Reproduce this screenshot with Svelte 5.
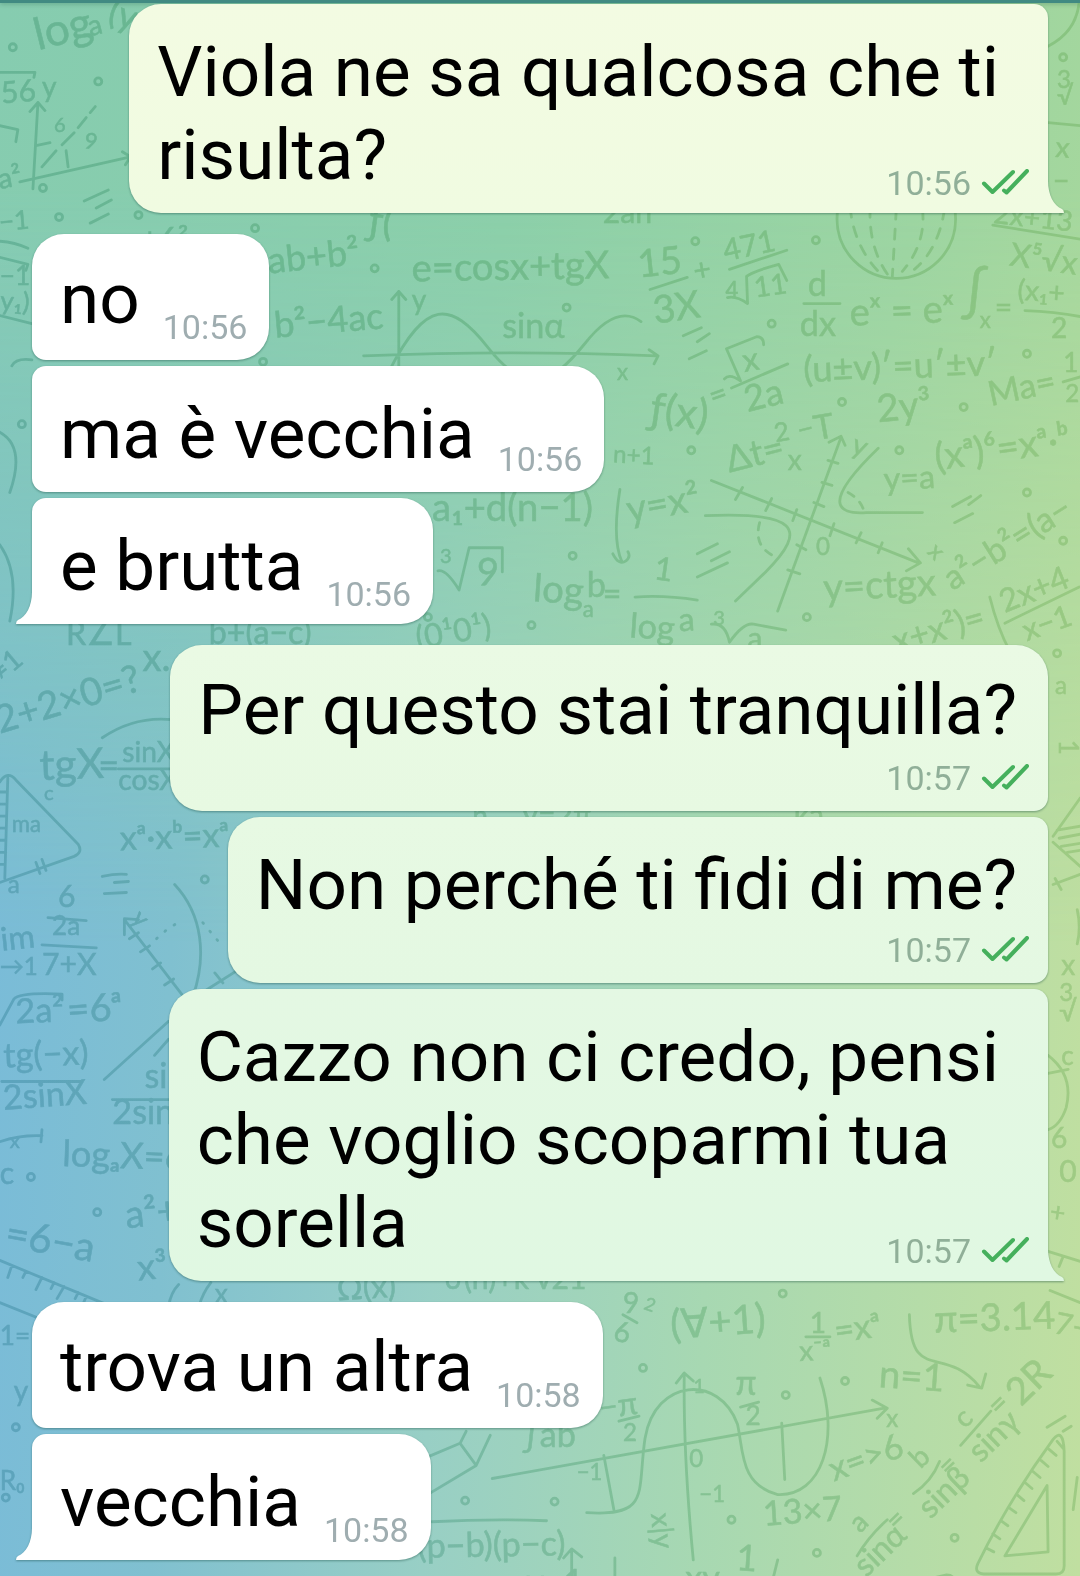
<script lang="ts">
  type Message = {
    text: string;
    time: string;
    out?: boolean;
    first?: boolean;
    last?: boolean;
    layout: 'inline' | 'stacked' | 'multi';
    from?: string;
    to?: string;
  };

  const messages: Message[] = [
    { text: 'Viola ne sa qualcosa che ti\nrisulta?', time: '10:56', out: true, last: true, layout: 'multi', from: '#f3fbe2', to: '#f0fbe1' },
    { text: 'no', time: '10:56', first: true, layout: 'inline' },
    { text: 'ma è vecchia', time: '10:56', layout: 'inline' },
    { text: 'e brutta', time: '10:56', last: true, layout: 'inline' },
    { text: 'Per questo stai tranquilla?', time: '10:57', out: true, first: true, layout: 'stacked', from: '#eafae4', to: '#e7f9e2' },
    { text: 'Non perché ti fidi di me?', time: '10:57', out: true, layout: 'stacked', from: '#e7f9e3', to: '#e4f8e2' },
    { text: 'Cazzo non ci credo, pensi\nche voglio scoparmi tua\nsorella', time: '10:57', out: true, last: true, layout: 'multi', from: '#e4f8e3', to: '#e0f8e2' },
    { text: 'trova un altra', time: '10:58', first: true, layout: 'inline' },
    { text: 'vecchia', time: '10:58', last: true, layout: 'inline' }
  ];

  // wallpaper formulas: text, x, baseline y, size, rotation
  const formulas: [string, number, number, number, number][] = [
    ['log', 38, 50, 44, -14], ['a', 90, 36, 28, -14], ['(y', 106, 22, 36, 18],
    ['56', 2, 103, 30, -5], ['y', 42, 97, 28, 0], ['6', 54, 131, 20, 0], ['9', 83, 147, 22, 10],
    ['a²', 0, 188, 28, -10], ['−1', 0, 230, 26, -5], ['−1', 0, 284, 26, 0], ['y₁)', 0, 308, 26, 4],
    ['+6²', 140, 250, 32, 0], ['ab+b²', 268, 272, 36, -6], ['b²−4ac', 274, 336, 36, -5],
    ['y', 410, 308, 28, 0], ['e=cosx+tgX', 410, 280, 38, -1], ['sinα', 500, 336, 34, 0],
    ['ƒ(', 366, 232, 40, 8], ['2an', 600, 222, 30, 0],
    ['15', 636, 276, 38, -6], ['+', 692, 280, 30, -10], ['3X', 652, 322, 38, -8],
    ['471', 722, 260, 30, -12], ['4', 722, 296, 22, 0], ['11', 752, 296, 28, -8],
    ['d', 804, 294, 34, 0], ['dx', 796, 334, 34, 0], ['eˣ = eˣ', 846, 324, 38, -2],
    ['∫', 956, 308, 54, 0], ['x', 975, 326, 22, 0], ['=', 990, 316, 30, 0],
    ['2x+13', 988, 222, 28, 6], ['X⁵√x', 1004, 264, 32, 8], ['(x₁+', 1012, 298, 28, 4], ['2', 1046, 336, 28, 0],
    ['x', 614, 378, 22, 0], ['ƒ(x)', 646, 420, 42, 8], ['=', 710, 405, 30, -20],
    ['x', 741, 370, 32, -10], ['2a', 744, 410, 36, -14],
    ['(u±v)′=u′±v′', 800, 380, 36, -2], ['2y³', 874, 420, 38, -6],
    ['Ma=', 986, 404, 34, -12], ['1', 1058, 370, 26, 0], ['2', 1060, 400, 24, 0],
    ['n+1', 610, 460, 24, 3], ['Δt=', 726, 470, 36, -14], ['2', 772, 440, 26, -10], ['x', 784, 468, 28, 0], ['−', 796, 438, 28, -14], ['T', 812, 438, 34, -10],
    ['y', 846, 450, 28, 20], ['y=a', 880, 488, 32, -3], ['(xᵃ)⁶=xᵃ·ᵇ', 932, 468, 38, -8],
    ['a₁+d(n−1)', 430, 518, 38, 0], ['y=x²', 626, 520, 38, -10],
    ['3', 438, 560, 20, 0], ['9', 474, 582, 38, 2], ['log', 530, 598, 38, 4], ['a', 580, 614, 22, 0], ['b', 584, 594, 34, 0], ['=', 600, 602, 32, 0],
    ['1', 650, 576, 32, 8], ['log', 626, 634, 34, 4], ['a', 676, 628, 32, -4], ['3', 710, 622, 20, 0], ['a', 744, 646, 30, 0],
    ['y=ctgx', 820, 598, 38, -3], ['x', 922, 550, 24, 45], ['0', 812, 552, 24, 0],
    ['a²−b²=(a−', 948, 588, 34, -32], ['2x+4', 1000, 610, 32, -22], ['x−1', 1022, 638, 30, -20], ['x+x²)=', 892, 650, 34, -16],
    ['R∠L', 66, 642, 32, 0], ['b+(a−c)', 208, 641, 32, 0], ['(0¹0¹)', 416, 646, 32, -10],
    ['≠1', 0, 680, 28, -40], ['x.', 142, 668, 38, 0], ['2+2×0=?', 0, 730, 38, -17],
    ['tgX', 40, 776, 42, -2], ['=', 98, 774, 36, 0], ['sinX', 122, 758, 28, 0], ['cosX', 118, 786, 28, 0], ['c', 44, 796, 20, 0],
    ['ma', 12, 828, 22, 0], ['a', 8, 888, 24, 0], ['xᵃ·xᵇ=xᵃ', 120, 846, 34, -2],
    ['6', 58, 902, 30, 0], ['2a', 52, 930, 26, 0], ['im', 2, 946, 32, -6], ['→1', 0, 970, 24, 0], ['7+X', 42, 970, 30, 0],
    ['y', 130, 915, 24, 45], ['2a²', 16, 1018, 34, -2], ['=6ᵃ', 68, 1018, 38, -4],
    ['tg(−x)', 4, 1062, 34, -2], ['2sinX', 4, 1104, 34, -4], ['si', 144, 1082, 34, 0], ['2sin', 112, 1118, 34, 0],
    ['x', 10, 1142, 20, 0], ['logₐX=6', 62, 1160, 36, 2], ['c', 0, 1178, 30, 0],
    ['=6−a', 4, 1240, 40, 10], ['a²+', 126, 1222, 38, -6], ['x³', 138, 1274, 36, -6],
    ['1=', 0, 1338, 26, 0], ['y', 14, 1394, 28, 0], ['R₀', 0, 1482, 26, 0],
    ['Ω(x)', 336, 1294, 32, -4], ['∪(n)+k v21', 440, 1282, 30, 0],
    ['6', 610, 1334, 28, 8], ['9', 620, 1306, 28, 0], ['2', 640, 1302, 18, 20], ['(∀+1)', 668, 1332, 40, -4],
    ['1', 806, 1326, 28, 0], ['x⁻ᵃ', 796, 1354, 28, -3], ['=xᵃ', 832, 1336, 34, -8],
    ['π=3.14', 930, 1326, 38, -2], ['7−', 1048, 1326, 30, 12], ['n=1', 874, 1380, 38, 4],
    ['−π', 598, 1412, 32, -8], ['2', 620, 1434, 24, 0], ['π', 732, 1388, 34, 0], ['2', 742, 1418, 26, 0],
    ['1', 690, 1386, 20, 0], ['−1', 574, 1472, 22, 0], ['−1', 696, 1494, 22, 0], ['x', 882, 1420, 24, 0], ['0', 686, 1460, 24, 0],
    ['∫ab', 520, 1440, 34, 0], ['x=>6', 830, 1474, 34, -20], ['13×7', 760, 1518, 34, -4],
    ['x|y', 648, 1506, 28, 85], ['(p−b)(p−c)', 416, 1550, 34, -1],
    ['=', 994, 1410, 30, -44], ['2R', 1016, 1400, 38, -44], ['c', 960, 1422, 28, -44], ['sinγ', 976, 1456, 32, -44],
    ['=', 944, 1470, 28, -44], ['b', 916, 1462, 28, -44], ['sinβ', 926, 1512, 32, -44],
    ['=', 892, 1524, 28, -44], ['a', 856, 1526, 28, -44], ['sinα', 862, 1570, 32, -44],
    ['v−1', 524, 1586, 34, 0], ['xy', 682, 1582, 34, 0], ['1', 732, 1562, 36, 4],
    ['3', 1052, 88, 24, 0], ['√', 1052, 104, 26, 0], ['x', 1050, 156, 28, 4], ['−', 1048, 190, 28, 0],
    ['a', 1050, 690, 24, 0], ['1', 1054, 736, 26, 90], ['x', 1056, 970, 28, 0], ['3', 1054, 996, 24, 0], ['√', 1054, 1016, 28, 0],
    ['c', 1056, 1060, 26, 0], ['6', 1046, 1142, 28, 0], ['0', 1054, 1176, 30, 0], ['+', 1044, 1214, 26, 8],
    ['n', 470, 822, 28, 0], ['y=2π', 520, 822, 30, 0], ['ka', 790, 822, 30, 0], ['x', 214, 1296, 26, 0]
  ];

  const dots = [
    [13, 47], [98, 81], [43, 187], [59, 216], [138, 214], [254, 227], [373, 267], [564, 306], [692, 240], [812, 239],
    [768, 322], [1022, 352], [838, 400], [959, 405], [688, 448], [895, 448], [570, 553], [529, 622], [1022, 490], [1058, 538],
    [803, 614], [1052, 650], [204, 875], [31, 1171], [97, 1206], [779, 1287], [640, 1361], [782, 1388], [841, 1374], [463, 1493],
    [552, 1494], [728, 1512], [813, 1545], [950, 1530], [1058, 57], [426, 614], [6, 1490], [16, 1420], [262, 360], [22, 422]
  ];
</script>

<div class="chat">
  <svg class="wallpaper" viewBox="0 0 1075 1568" preserveAspectRatio="xMidYMin slice" aria-hidden="true">
    <defs>
      <linearGradient id="ink" gradientUnits="userSpaceOnUse" x1="0" y1="1000" x2="1075" y2="700">
        <stop offset="0" stop-color="#c0dee0" />
        <stop offset="0.4" stop-color="#c8e5d4" />
        <stop offset="1" stop-color="#d8ead0" />
      </linearGradient>
      <mask id="doodles" maskUnits="userSpaceOnUse" x="0" y="0" width="1075" height="1568">
        <g class="words">
          {#each formulas as [t, x, y, size, rot]}
            <text {x} {y} font-size={size} transform="rotate({rot} {x} {y})">{t}</text>
          {/each}
        </g>
        <g class="lines">
          {#each dots as [cx, cy]}
            <circle {cx} {cy} r="3.5" />
          {/each}
          <!-- top left axes -->
          <path d="M0 72h35l-1 5M0 125l18 4-2 12M33 188l5-86m-8 9 8-9 7 8M20 181l110-25m-8-5 8 5-5 8M42 166l14-16m6-6 12-12m4-5 8-10m4-5 5-6M36 145l14-3M66 150l2 16" />
          <path d="M84 200l24-11M96 207l15-8M90 222l18-9M0 240q15 1 28 7M0 256l28 7-2 6M0 314l32 8M12 364q4-8 20-6M0 430q26 14 10 60M0 542q20 28 10 76" />
          <!-- sine curve -->
          <path d="M362 354q150-6 292 0m-8-6 9 6-4 8M397 380v-90m-7 8 7-8 7 8M388 368c36-70 60-70 98-22s62 38 96-4c22-28 40-34 56-22" />
          <path d="M680 334l18-8M694 340l12-8M686 357l17-8M647 288l37-12M726 268l57-19M800 302h36M1020 309q30 1 55 6M988 224l87 14M728 386l56-24M1058 380l17-5" />
          <!-- roots -->
          <path d="M721 377q5-6 16 2l-14-32 30-12q7 0 7 8M724 296q9-2 20 6l-1-27q6-5 32-12l8 16M436 568q8-2 21 19l10-42h33v24M0 1020l14-26q6-7 48-5v6M708 621q14-2 18 18 14-20 24-18l32 6" />
          <circle cx="892" cy="218" r="59" />
          <path stroke-dasharray="10 10" d="M846 206q4 40 30 66M866 206q-2 40 18 68M892 208l-4 68M918 208q4 34-20 62M940 208q-6 40-30 60" />
          <!-- crossed axes with hyperbola -->
          <path d="M708 478l206 82m-10-14 12 14-14 8M774 608l63-173m-12 5 12-6 4 9M702 513c90-4 104 12 60 56l-30 29M874 446c-56 54-42 66-12 64h56" />
          <path d="M732 497l7-12M762 508l6-12M789 518l4-11M826 533l4-12M852 540l5-10M874 550l4-10M824 458l10 3M818 480l10 3M810 500l10 4M793 542l9 5M784 567l12 4" />
          <path stroke-dasharray="7 8" d="M756 520q-6 22 12 32M844 490q14 8 16 20" />
          <path d="M617 487q-8 50 2 72m-9-8q6 12 13 7 5-4 2-9M694 551l20-10M708 558l18-9M694 574l30-14M632 594q30-2 62 3M948 504l18-10M964 502l12-9M950 520l18-9M985 594q8 32 20 54M1000 620l74-36" />
          <!-- left triangle -->
          <path d="M0 778q8-12 16-2l62 64q5 8-4 12L0 878M8 774l-3 100M0 788h7M0 800h7M0 812h6M0 824h6M0 836h6M0 848h6M0 860h5M36 858l4 11M42 855l4 11" />
          <path d="M102 734q32-22 70-18M118 765h54M102 872q14-3 24-2M114 878l14-1M104 889l22-1M48 913l38 3M42 940l54 3M174 880c28 30 32 72 18 112M124 915l60 78M124 930v-16l14 1M129 934l9-6M140 947l9-6M152 964l8-6M164 980l9-6M204 986l30-19M214 968l8 10M104 1074l64-58M154 1050l14-16M2 1076h78M112 1094h56M0 1136q20-7 42-6M42 1124l-1 12" />
          <path stroke-dasharray="1 10" d="M156 934q12-12 26-18M202 918l20 24" />
          <!-- ruler -->
          <path d="M0 1254l116 48M0 1296l40 16M12 1259l-4 12M26 1265l-3 6M42 1271l-6 12M54 1276l-3 6M64 1280l-7 12M78 1286l-3 6M86 1290l-5 12M168 1300q2-14 10-22M198 1300q4-14 12-24" />
          <!-- right edge -->
          <path d="M1043 46q28-14 31-44M1043 122l32 3M1048 832l27-38M1048 838l27 24M1052 826l23-4M1054 834l21-4M1056 842l19-3M1062 848l13-2M1048 880l27-10M1050 874l6 11M1072 905q4 18 0 34M1043 1050q26 20 18 52-6 18-18 22M1043 1068l20-4M1043 1245l32 10M1058 1250l-4 10M1045 1284l30 12" />
          <!-- bottom wave on tilted axis -->
          <path d="M490 1471l390-70m-12-8 15 8-10 10M681 1368q-1 80 9 184M673 1376l8-10 9 8M584 1505c64 4 50-20 58-74 10-60 74-64 92-14 6 26 2 60 40 70 44 2 62-56 42-116M601 1448l10 54M778 1416l3 56M616 1414l20-5M737 1400l18-5M802 1330h24" />
          <path d="M905 1308c2 70 34 28 70 72m-12-2 14 3 4-14M853 1548q12-20 30-36M909 1486q18-12 26-32M956 1438l30-34M1042 1420l18-11M1058 1424l8-5M620 1308l14 8" />
          <!-- set square -->
          <path d="M1048 1432q10-12 11 12v114q0 8-8 8h-72q-10-1-6-10 30-62 75-124zM1042 1478l1 66-43 4zM1052 1434l6 7M1044 1442l7 6M1036 1453l7 6M1028 1464l7 6M1020 1475l7 6M1012 1487l7 6M1004 1500l7 5M996 1513l7 5M988 1526l7 5M981 1540l8 4" />
          <path d="M420 1452l38-16 16 22-60 36M458 1436l6-12M474 1458l14-30M430 1514q60-3 114-1M569 1578v-36m-8 8 8-9 10 8M612 1550v20M774 1552l-5 20M910 1574l32-7q8 0 8 8M1072 1470l-4 32" />
        </g>
      </mask>
    </defs>
    <rect width="1075" height="1568" fill="url(#ink)" mask="url(#doodles)" />
  </svg>

  <header class="bar"></header>

  <main class="messages">
    {#each messages as m}
      <div
        class="bubble {m.layout}"
        class:out={m.out}
        class:first={m.first}
        class:last={m.last}
        style={m.out ? `--from: ${m.from}; --to: ${m.to}` : undefined}
      >
        <p class="text">
          {#each m.text.split('\n') as line}
            <span class="line">{line}</span>
          {/each}
        </p>
        <div class="meta">
          <time>{m.time}</time>
          {#if m.out}
            <svg class="checks" viewBox="0 0 48 28" role="img" aria-label="Letto">
              <path d="M3 14.5 11.5 23 32 3M23 21.5 25.5 23.5 46 2" />
            </svg>
          {/if}
        </div>
      </div>
    {/each}
  </main>
</div>

<style>
  :global(body) {
    margin: 0;
  }
  .chat {
    position: relative;
    overflow: hidden;
    min-height: 100vh;
    background: linear-gradient(92deg, #79bbd9 0%, #80c0d0 18%, #98cfc5 42%, #a7d8b2 66%, #c0dfa0 100%);
    font-family: Roboto, "Noto Sans", sans-serif;
  }
  .chat::before {
    content: '';
    position: absolute;
    inset: 0;
    background: linear-gradient(100deg, #86ccb0 0%, #8bcfa8 40%, #9bd4a1 70%, #b2db98 100%);
    mask-image: linear-gradient(to bottom, #000 12%, transparent 60%);
  }
  .wallpaper {
    position: absolute;
    inset: 0;
    width: 100%;
    height: 100%;
    mix-blend-mode: multiply;
    font-family: Lato, "DejaVu Sans", sans-serif;
  }
  .words {
    fill: #fff;
    stroke: #fff;
    stroke-width: 0.5;
  }
  .lines {
    fill: none;
    stroke: #fff;
    stroke-width: 2.8;
    stroke-linecap: round;
    stroke-linejoin: round;
  }
  .bar {
    position: relative;
    height: 3px;
    background: #418a82;
    box-shadow: 0 1px 4px rgba(0, 60, 40, 0.3);
  }
  .messages {
    position: relative;
    display: flex;
    flex-direction: column;
    align-items: flex-start;
    gap: 6px;
    padding: 1px 32px 16px;
  }
  .bubble {
    position: relative;
    display: grid;
    box-sizing: border-box;
    padding: 26px 22px 13px 28px;
    border-radius: 14px 32px 32px 14px;
    background: #fff;
    filter: drop-shadow(0 1px 1px rgba(20, 70, 60, 0.45));
  }
  .bubble.first {
    padding-top: 23px;
    border-top-left-radius: 32px;
  }
  .bubble.last {
    padding-bottom: 10px;
    border-bottom-left-radius: 0;
  }
  .bubble.first:not(:first-child) {
    margin-top: 15px;
  }
  .bubble.out {
    align-self: flex-end;
    padding-right: 19px;
    border-radius: 32px 14px 14px 32px;
    background: linear-gradient(var(--from), var(--to));
  }
  .bubble.out.first {
    border-top-right-radius: 32px;
  }
  .bubble.out.last {
    border-bottom-right-radius: 0;
  }
  /* tail */
  .bubble.last::after {
    content: '';
    position: absolute;
    bottom: 0;
    right: 100%;
    width: 16px;
    height: 32px;
    background: #fff;
    clip-path: path('M16 0C16 14 10 25 2 28Q0 29 0 32H16Z');
  }
  .bubble.out.last::after {
    right: auto;
    left: 100%;
    background: var(--to);
    clip-path: path('M0 0C0 14 6 25 14 28Q16 29 16 32H0Z');
  }
  .text {
    margin: 0 0 4px;
    color: #000;
    font-size: 71px;
    line-height: 83px;
  }
  .line {
    display: block;
    width: fit-content;
  }
  .first .text,
  .last .text {
    margin-bottom: 7px;
  }
  .meta {
    display: flex;
    align-items: center;
    gap: 10px;
    align-self: end;
    justify-self: end;
    color: #9fadb0;
    font-size: 34px;
    line-height: 40px;
  }
  .out .meta {
    color: #90af98;
  }
  .inline {
    grid-template-columns: auto auto;
    column-gap: 23px;
  }
  .stacked .text {
    padding-right: 12px;
  }
  .multi .text,
  .multi .meta {
    grid-area: 1 / 1;
  }
  .multi .text {
    padding-right: 30px;
  }
  .checks {
    width: 48px;
    height: 28px;
    fill: none;
    stroke: #45b05c;
    stroke-width: 4;
    stroke-linecap: round;
    stroke-linejoin: round;
  }
</style>
